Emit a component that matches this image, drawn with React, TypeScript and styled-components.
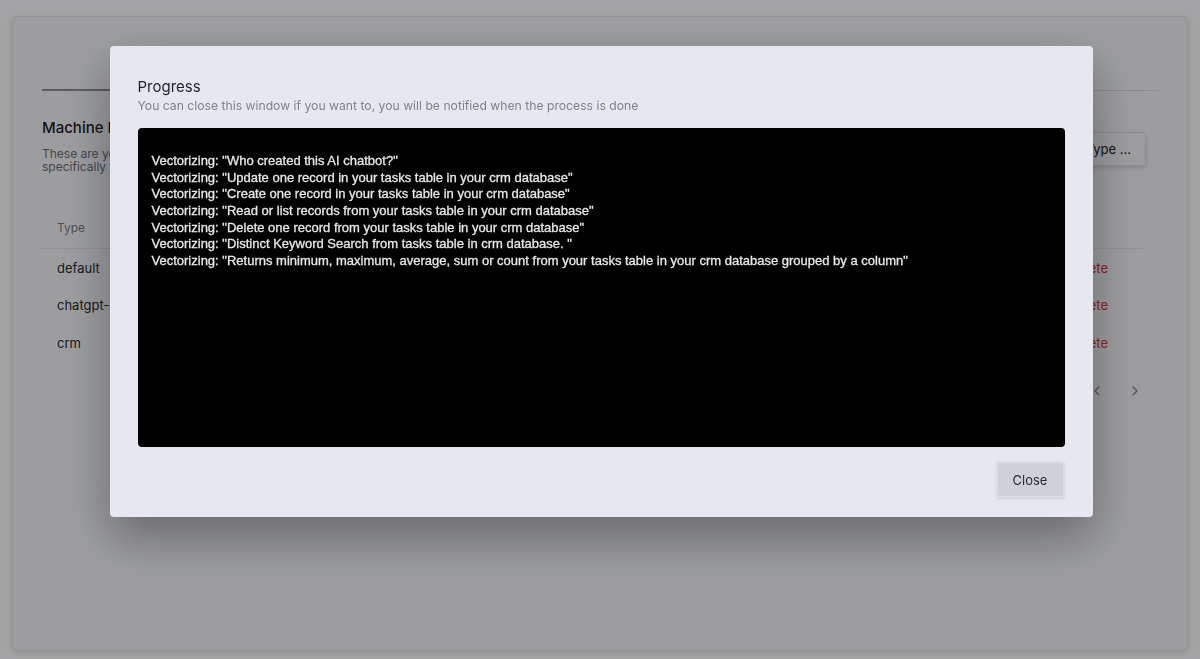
import React from 'react';
import styled, { createGlobalStyle } from 'styled-components';

const GlobalStyle = createGlobalStyle`
    html, body {
        margin: 0;
        padding: 0;
        background: #fbfbfd;
        font-family: Inter, "Noto Sans", sans-serif;
        color: #1f2024;
    }
    * {
        box-sizing: border-box;
    }
`;

const Page = styled.div`
    height: 659px;
    padding: 16px 12px 8px 12px;
`;

const Card = styled.div`
    height: 635px;
    background: #f1f2f6;
    border: 1px solid #e2e3e8;
    border-radius: 6px;
    box-shadow: 0 2px 6px rgba(0, 0, 0, 0.12);
    padding: 0 28px 0 29px;
`;

const Tabs = styled.div`
    height: 74px;
    border-bottom: 1px solid #d7d8dd;
    display: flex;
    align-items: flex-end;
`;

const ActiveTab = styled.div`
    width: 140px;
    height: 2px;
    margin-bottom: -1px;
    background: #8e8f95;
`;

const HeaderRow = styled.div`
    display: flex;
    justify-content: space-between;
    align-items: flex-start;
    padding-top: 27px;
`;

const Heading = styled.h2`
    margin: 0;
    font-size: 15px;
    font-weight: 500;
`;

const Description = styled.p`
    margin: 10px 0 0 0;
    font-size: 12px;
    line-height: 13px;
    color: #6b6c72;
    width: 300px;
`;

const AddButton = styled.button`
    margin-top: 14px;
    margin-right: 13px;
    height: 34px;
    padding: 0 14px;
    font-family: inherit;
    font-size: 13px;
    color: #1f2024;
    background: #f1f2f6;
    border: 1px solid #dcdde3;
    border-radius: 4px;
    box-shadow: 0 2px 4px rgba(0, 0, 0, 0.15);
`;

const Table = styled.div`
    margin-top: 34px;
    margin-right: 15px;
    font-size: 13px;
`;

const TableRow = styled.div<{ $head?: boolean }>`
    display: flex;
    justify-content: space-between;
    align-items: center;
    height: ${(p) => (p.$head ? '42px' : '37.5px')};
    padding: 0 36px 0 15px;
    color: ${(p) => (p.$head ? '#7b7c82' : '#2a2b30')};
    font-size: ${(p) => (p.$head ? '12px' : '13px')};
    border-bottom: ${(p) => (p.$head ? '1px solid #dfe0e5' : 'none')};
`;

const DeleteLink = styled.span`
    color: #d9362f;
`;

const Pager = styled.div`
    display: flex;
    justify-content: flex-end;
    gap: 22px;
    padding: 21px 16px 0 0;
    color: #85868c;
`;

const Overlay = styled.div`
    position: fixed;
    inset: 0;
    background: rgba(0, 0, 0, 0.35);
    display: flex;
    justify-content: center;
    align-items: flex-start;
    padding-top: 46px;
`;

const Modal = styled.div`
    width: 983px;
    margin-left: 2px;
    background: #e6e7f1;
    border-radius: 4px;
    padding: 32px 28px 19px 28px;
    box-shadow: 0 20px 50px rgba(0, 0, 0, 0.35);
`;

const ModalTitle = styled.h3`
    margin: 0;
    font-size: 15px;
    font-weight: 400;
    color: #1f2024;
    line-height: 18px;
`;

const ModalSubtitle = styled.p`
    margin: 2px 0 0 0;
    font-size: 12.2px;
    color: #808188;
    line-height: 16px;
`;

const Console = styled.div`
    margin: 14px 0 0 0;
    height: 319px;
    background: #000;
    border-radius: 4px;
    padding: 25px 14px 8px 14px;
    color: #e8e8e8;
    font-family: "Liberation Sans", Arial, sans-serif;
    font-size: 13px;
    -webkit-text-stroke: 0.3px #e8e8e8;
    overflow: hidden;
`;

const ConsoleLine = styled.div`
    height: 16.7px;
    line-height: 16.7px;
    white-space: pre;
`;

const Footer = styled.div`
    display: flex;
    justify-content: flex-end;
    margin-top: 14px;
`;

const CloseButton = styled.button`
    height: 37px;
    width: 69px;
    font-family: inherit;
    font-size: 13px;
    color: #2a2b30;
    background: #cfd0da;
    border: 2px solid #dcdde6;
    border-radius: 4px;
    box-shadow: 0 1px 2px rgba(0, 0, 0, 0.12);
`;

const Chevron = ({ dir }: { dir: 'left' | 'right' }) => (
    <svg width="16" height="16" viewBox="0 0 24 24" fill="none" stroke="currentColor" strokeWidth="2" strokeLinecap="round" strokeLinejoin="round">
        <polyline points={dir === 'left' ? '15 18 9 12 15 6' : '9 18 15 12 9 6'} />
    </svg>
);

const lines = [
    'Vectorizing: "Who created this AI chatbot?"',
    'Vectorizing: "Update one record in your tasks table in your crm database"',
    'Vectorizing: "Create one record in your tasks table in your crm database"',
    'Vectorizing: "Read or list records from your tasks table in your crm database"',
    'Vectorizing: "Delete one record from your tasks table in your crm database"',
    'Vectorizing: "Distinct Keyword Search from tasks table in crm database. "',
    'Vectorizing: "Returns minimum, maximum, average, sum or count from your tasks table in your crm database grouped by a column"',
];

const types = ['default', 'chatgpt-sql', 'crm'];

const App = () => (
    <>
        <GlobalStyle />
        <Page>
            <Card>
                <Tabs>
                    <ActiveTab />
                </Tabs>
                <HeaderRow>
                    <div>
                        <Heading>Machine Learning Types</Heading>
                        <Description>
                            These are your Machine Learning types, used specifically for your AI chatbots
                        </Description>
                    </div>
                    <AddButton>Add Type ...</AddButton>
                </HeaderRow>
                <Table>
                    <TableRow $head>
                        <span>Type</span>
                        <span />
                    </TableRow>
                    {types.map((t) => (
                        <TableRow key={t}>
                            <span>{t}</span>
                            <DeleteLink>Delete</DeleteLink>
                        </TableRow>
                    ))}
                </Table>
                <Pager>
                    <Chevron dir="left" />
                    <Chevron dir="right" />
                </Pager>
            </Card>
        </Page>
        <Overlay>
            <Modal>
                <ModalTitle>Progress</ModalTitle>
                <ModalSubtitle>
                    You can close this window if you want to, you will be notified when the process is done
                </ModalSubtitle>
                <Console>
                    {lines.map((l, i) => (
                        <ConsoleLine key={i}>{l}</ConsoleLine>
                    ))}
                </Console>
                <Footer>
                    <CloseButton>Close</CloseButton>
                </Footer>
            </Modal>
        </Overlay>
    </>
);

export default App;
